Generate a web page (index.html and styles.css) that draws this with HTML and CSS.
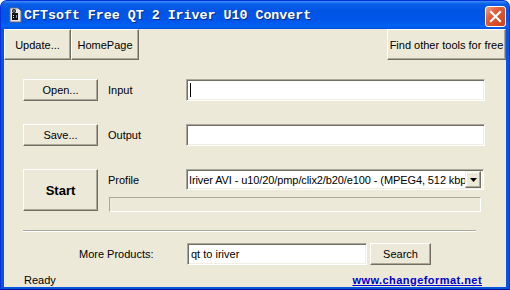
FILE: index.html
```html
<!DOCTYPE html>
<html lang="en">
<head>
    <meta charset="UTF-8">
    <title>CFTsoft Free QT 2 Iriver U10 Convert</title>
    <link rel="stylesheet" href="styles.css">
</head>
<body>
    <div class="window">
        <div class="titlebar">
            <svg class="app-icon" width="13" height="16" viewBox="0 0 13 16">
                <path d="M1 1h8l3 3v11H1z" fill="#e8e8e8" stroke="#6a6a6a"/>
                <rect x="3" y="6" width="6" height="7" fill="#111"/>
                <circle cx="5" cy="4" r="2" fill="#111"/>
                <circle cx="5" cy="4" r="0.8" fill="#ddd"/>
                <rect x="4" y="8" width="1" height="1" fill="#ddd"/>
                <rect x="4" y="10" width="1" height="1" fill="#ddd"/>
                <rect x="7" y="8" width="1" height="3" fill="#888"/>
            </svg>
            <span class="title">CFTsoft Free QT 2 Iriver U10 Convert</span>
            <button class="close">
                <svg width="13" height="13" viewBox="0 0 13 13">
                    <path d="M2 2l9 9M11 2l-9 9" stroke="#fff" stroke-width="2.2" stroke-linecap="square"/>
                </svg>
            </button>
        </div>

        <div class="client">
            <div class="toolbar">
                <button class="btn tool-update">Update...</button>
                <button class="btn tool-home">HomePage</button>
                <button class="btn tool-find">Find other tools for free</button>
            </div>

            <div class="main">
                <div class="row">
                    <button class="btn side-btn">Open...</button>
                    <span class="label">Input</span>
                    <div class="field"><span class="caret"></span></div>
                </div>
                <div class="row">
                    <button class="btn side-btn">Save...</button>
                    <span class="label">Output</span>
                    <div class="field"></div>
                </div>
                <div class="start-row">
                    <button class="btn start-btn">Start</button>
                    <div class="start-right">
                        <div class="profile-line">
                            <span class="label">Profile</span>
                            <div class="select">
                                <span class="select-text">Iriver AVI - u10/20/pmp/clix2/b20/e100 - (MPEG4, 512 kbps)</span>
                                <span class="drop">
                                    <svg width="7" height="4" viewBox="0 0 7 4"><path d="M0 0h7L3.5 4z" fill="#000"/></svg>
                                </span>
                            </div>
                        </div>
                        <div class="progress"></div>
                    </div>
                </div>
            </div>

            <div class="separator"></div>

            <div class="more">
                <span class="more-label">More Products:</span>
                <div class="field more-field">qt to iriver</div>
                <button class="btn search-btn">Search</button>
            </div>

            <div class="status">
                <span>Ready</span>
                <a class="site-link" href="#">www.changeformat.net</a>
            </div>
        </div>
    </div>
</body>
</html>
```

FILE: styles.css
```css
body { margin: 0; background: #fff; font: 11px "Liberation Sans", Arial, sans-serif; color: #000; }

.window { width: 510px; height: 290px; box-sizing: border-box; display: flex; flex-direction: column; background: #0853e0; border: 1px solid #0831d9; border-bottom-color: #00138c; border-radius: 7px 7px 0 0; overflow: hidden; }

.titlebar { height: 28px; flex: none; display: flex; align-items: center; padding: 0 3px 0 8px; background: linear-gradient(#3d8ef8 0, #0a5fe8 3px, #0055e5 9px, #0056ea 20px, #0062f4 25px, #0052e0 28px); }
.app-icon { flex: none; }
.title { flex: 1; margin-left: 2px; padding-top: 1px; font: bold 13.3px "Liberation Mono", monospace; color: #fff; text-shadow: 1px 1px #0a2a8a; white-space: nowrap; }
.close { width: 21px; height: 21px; margin-top: 2px; padding: 0; display: flex; align-items: center; justify-content: center; border: 1px solid #fff; border-radius: 3px; background: linear-gradient(135deg, #f0a089 0, #e0603a 35%, #c8401a 100%); }

.client { flex: 1; margin: 0 3px 3px; background: #ece9d8; display: flex; flex-direction: column; }

.btn { font: inherit; color: #000; background: #ece9d8; border: 1px solid; border-color: #fff #716f64 #716f64 #fff; box-shadow: inset -1px -1px #aca899; padding: 0; }

.toolbar { display: flex; height: 31px; flex: none; }
.toolbar .btn { height: 31px; }
.tool-update { width: 67px; }
.tool-home { width: 68px; }
.tool-find { width: 119px; margin-left: auto; }

.main { display: flex; flex-direction: column; gap: 23px; padding: 19px 0 0 19px; }
.row { display: flex; align-items: center; height: 22px; }
.side-btn { width: 75px; height: 22px; }
.label { width: 78px; margin-left: 10px; flex: none; }

.field { box-sizing: border-box; height: 22px; width: 299px; background: #fff; border: 1px solid; border-color: #aca899 #fff #fff #aca899; box-shadow: inset 1px 1px #716f64, inset -1px -1px #f1efe2; display: flex; align-items: center; padding-left: 3px; }
.caret { width: 1px; height: 14px; background: #000; }

.start-row { display: flex; }
.start-btn { width: 75px; height: 42px; font-size: 13px; font-weight: bold; }
.start-right { display: flex; flex-direction: column; }
.profile-line { display: flex; align-items: center; height: 21px; }
.select { box-sizing: border-box; width: 298px; height: 21px; background: #fff; border: 1px solid; border-color: #aca899 #fff #fff #aca899; box-shadow: inset 1px 1px #716f64, inset -1px -1px #f1efe2; display: flex; align-items: center; padding: 0 2px 0 2px; overflow: hidden; }
.select-text { flex: 1; white-space: nowrap; overflow: hidden; letter-spacing: -0.1px; }
.drop { box-sizing: border-box; flex: none; width: 16px; height: 17px; display: flex; align-items: center; justify-content: center; background: #ece9d8; border: 1px solid; border-color: #f1efe2 #716f64 #716f64 #f1efe2; box-shadow: inset -1px -1px #aca899, inset 1px 1px #fff; }
.progress { box-sizing: border-box; height: 15px; width: 372px; margin: 7px 0 0 11px; border: 1px solid; border-color: #aca899 #fff #fff #aca899; }

.separator { height: 0; margin: 18px 30px 0 19px; border-top: 1px solid #aca899; border-bottom: 1px solid #fff; }

.more { display: flex; align-items: center; height: 22px; margin-top: 11px; }
.more-label { width: 108px; margin-left: 75px; }
.more-field { width: 180px; }
.search-btn { width: 61px; height: 22px; margin-left: 3px; }

.status { display: flex; justify-content: space-between; align-items: center; height: 14px; margin-top: 8px; padding: 0 24px 0 20px; }
.site-link { color: #0000d0; font-weight: bold; text-decoration: underline; letter-spacing: 0.45px; }
```
